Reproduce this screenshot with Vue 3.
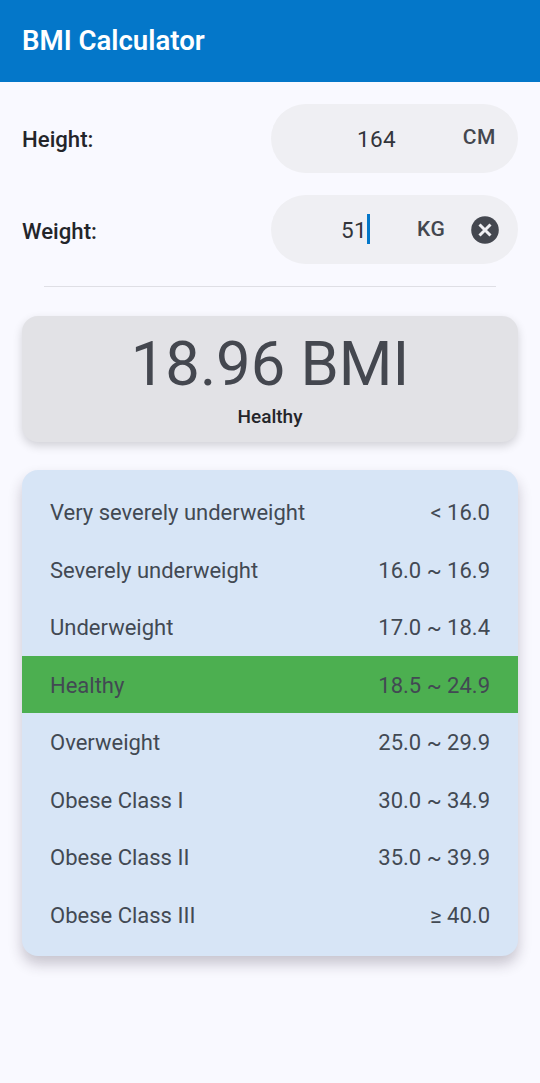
<script setup>
const ranges = [
  { name: 'Very severely underweight', range: '< 16.0' },
  { name: 'Severely underweight', range: '16.0 ~ 16.9' },
  { name: 'Underweight', range: '17.0 ~ 18.4' },
  { name: 'Healthy', range: '18.5 ~ 24.9', active: true },
  { name: 'Overweight', range: '25.0 ~ 29.9' },
  { name: 'Obese Class I', range: '30.0 ~ 34.9' },
  { name: 'Obese Class II', range: '35.0 ~ 39.9' },
  { name: 'Obese Class III', range: '≥ 40.0' }
]
</script>

<template>
  <div class="page">
    <header class="appbar">BMI Calculator</header>

    <div class="form">
      <div class="row">
        <span class="label">Height:</span>
        <div class="field">
          <span class="value value--height">164</span>
          <span class="unit unit--cm">CM</span>
        </div>
      </div>
      <div class="row row--weight">
        <span class="label">Weight:</span>
        <div class="field">
          <span class="value value--weight">51<i class="caret"></i></span>
          <span class="unit unit--kg">KG</span>
          <svg class="clear" width="28" height="28" viewBox="0 0 28 28">
            <circle cx="14" cy="14" r="13.8" fill="#44474f" />
            <path d="M8.5 8.5l11 11M19.5 8.5l-11 11" stroke="#f0f0f4" stroke-width="3" fill="none" />
          </svg>
        </div>
      </div>
    </div>

    <div class="divider"></div>

    <section class="result">
      <div class="score">18.96 BMI</div>
      <div class="status">Healthy</div>
    </section>

    <section class="table">
      <div
        v-for="item in ranges"
        :key="item.name"
        class="tr"
        :class="{ 'tr--active': item.active }"
      >
        <span>{{ item.name }}</span>
        <span>{{ item.range }}</span>
      </div>
    </section>
  </div>
</template>

<style>
html, body { margin: 0; background: #f9f9ff; }
</style>

<style scoped>
.page {
  width: 540px;
  height: 1083px;
  overflow: hidden;
  background: #f9f9ff;
  font-family: Roboto, "Liberation Sans", sans-serif;
}
.appbar {
  height: 82px;
  padding: 0 22px 1px;
  box-sizing: border-box;
  display: flex;
  align-items: center;
  background: #0477c9;
  color: #fff;
  font-size: 27.6px;
  font-weight: 600;
}
.form { padding: 22px 22px 0; }
.row {
  display: flex;
  align-items: center;
  justify-content: space-between;
}
.row--weight { margin-top: 22px; }
.label {
  font-size: 22.2px;
  font-weight: 500;
  color: #24252a;
}
.row--weight .label { margin-top: 2px; }
.field {
  width: 247px;
  height: 69px;
  border-radius: 35px;
  background: #efeff3;
  display: flex;
  align-items: center;
  color: #44474f;
}
.value {
  font-size: 22.5px;
  color: #33353b;
  letter-spacing: 0.3px;
}
.value--height { margin-left: 86px; }
.value--weight {
  margin-left: 70px;
  display: flex;
  align-items: center;
}
.caret {
  width: 3px;
  height: 30px;
  margin-top: -2px;
  background: #0477c9;
}
.unit {
  font-size: 21px;
  font-weight: 500;
  letter-spacing: 0.6px;
}
.unit--cm { margin-left: auto; margin-right: 22px; margin-top: -4px; }
.unit--kg { margin-left: 47px; margin-top: -2px; }
.clear { margin-left: 26px; }
.divider {
  height: 1px;
  margin: 22px 44px 0;
  background: #dfdfe5;
}
.result {
  height: 126px;
  margin: 29px 22px 0;
  border-radius: 16px;
  background: #e2e2e6;
  box-shadow: 0 4px 10px rgba(0, 0, 0, 0.16);
  text-align: center;
}
.score {
  padding-top: 10px;
  font-size: 61.5px;
  line-height: 76px;
  color: #44474f;
}
.status {
  margin-top: 3px;
  font-size: 19px;
  font-weight: 500;
  line-height: 24px;
  color: #24252a;
}
.table {
  margin: 28px 22px 0;
  padding: 13px 0;
  border-radius: 16px;
  background: #d7e5f6;
  box-shadow: 0 8px 14px rgba(40, 30, 50, 0.24);
}
.tr {
  height: 57.5px;
  padding: 2px 28px 0;
  box-sizing: border-box;
  display: flex;
  align-items: center;
  justify-content: space-between;
  font-size: 22px;
  color: #424953;
}
.tr--active { background: #4caf50; }
</style>
